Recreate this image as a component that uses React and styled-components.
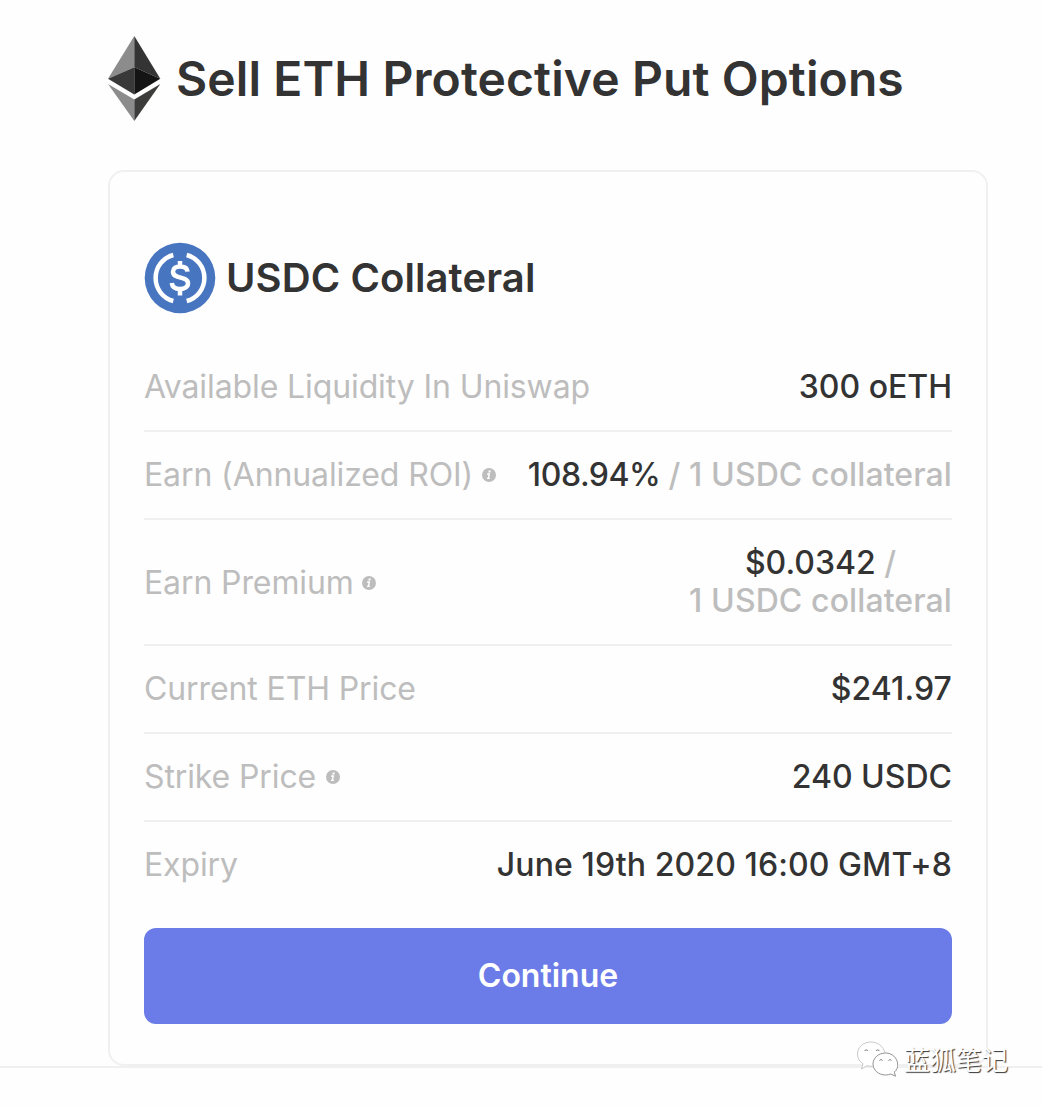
import React from 'react';
import styled, { createGlobalStyle } from 'styled-components';

const GlobalStyle = createGlobalStyle`
  * { box-sizing: border-box; }
  body {
    margin: 0;
    background: #fefefe;
    color: #333333;
    font-family: Inter, "Liberation Sans", sans-serif;
    -webkit-font-smoothing: antialiased;
  }
`;

const Page = styled.div`
  position: relative;
  width: 1042px;
  height: 1106px;
  overflow: hidden;
`;

const Content = styled.main`
  height: 1068px;
  padding: 34px 54px 0 108px;
  border-bottom: 2px solid #f0f0f0;
`;

const Header = styled.header`
  display: flex;
  align-items: center;
  gap: 15px;
  height: 90px;
  margin-bottom: 46px;
`;

const Title = styled.h1`
  margin: 0;
  font-size: 48px;
  font-weight: 600;
  line-height: 58px;
  white-space: nowrap;
  letter-spacing: 0.11px;
`;

const Card = styled.section`
  width: 880px;
  height: 896px;
  padding: 70px 34px 0;
  border: 2px solid #f0f0f0;
  border-radius: 16px;
`;

const CardHeader = styled.div`
  display: flex;
  align-items: center;
  gap: 10px;
  height: 72px;
  margin-bottom: 30px;
`;

const CardTitle = styled.h2`
  margin: 0;
  font-size: 40px;
  font-weight: 600;
  line-height: 48px;
  white-space: nowrap;
  letter-spacing: 0.1px;
`;

const Row = styled.div`
  display: flex;
  align-items: center;
  justify-content: space-between;
  padding: 24px 0;
  border-bottom: 2px solid #f0f0f0;
  font-size: 32px;
  line-height: 38px;
  white-space: nowrap;

  &:last-of-type { border-bottom: 0; }
`;

const Label = styled.div`
  display: flex;
  align-items: center;
  gap: ${(p) => p.$gap || 10}px;
  padding-top: ${(p) => (p.$tall ? 2 : 0)}px;
  color: #bdbdbd;
  font-weight: 400;
  letter-spacing: -0.11px;
`;

const Value = styled.div`
  font-weight: 500;
  text-align: center;
  letter-spacing: ${(p) => p.$spacing || 'normal'};
`;

const Muted = styled.span`
  color: #bdbdbd;
  letter-spacing: 0.1px;
`;

const Button = styled.button`
  width: 100%;
  height: 96px;
  margin-top: 20px;
  padding: 0;
  border: 0;
  border-radius: 12px;
  background: #6b7ce8;
  color: #fff;
  font: 600 32px/38px Inter, "Liberation Sans", sans-serif;
`;

const Watermark = styled.div`
  position: absolute;
  left: 856px;
  top: 1039px;
  display: flex;
  align-items: center;
  gap: 6px;
  height: 40px;
`;

const WatermarkText = styled.span`
  color: #fff;
  font-family: "Noto Sans CJK SC", sans-serif;
  font-size: 26px;
  line-height: 38px;
  text-shadow: 1px 1px 1px #333;
`;

const EthLogo = () => (
  <svg width="53" height="90" viewBox="0 0 53 90">
    <path fill="#8c8c8c" d="M26.3 2 0 44.8l26.3-11.6z" />
    <path fill="#343434" d="m26.3 2 26 42.8-26-11.6z" />
    <path fill="#393939" d="M26.3 33.2 0 44.8l26.3 15.7z" />
    <path fill="#141414" d="m26.3 33.2 26 11.6-26 15.7z" />
    <path fill="#8c8c8c" d="m0 50 26.3 15.5V87z" />
    <path fill="#3c3c3b" d="M52.3 50 26.3 65.5V87z" />
  </svg>
);

const UsdcLogo = () => (
  <svg width="72" height="72" viewBox="0 0 72 72">
    <circle cx="36" cy="36" r="35.3" fill="#4775c0" />
    <g fill="none" stroke="#fff" strokeWidth="4.5">
      <path d="M29.3 13a23.8 23.8 0 0 0 0 46M42.7 13a23.8 23.8 0 0 1 0 46" />
      <path d="M43.5 29.7c-.2-3.6-3.2-5.2-7.5-5.2s-7 2-7 5.2c0 8 15 3.8 15 11.6 0 3.6-3.2 5.6-8 5.6s-7.8-2-8.2-5.9M36 19v5M36 47.5v6" />
    </g>
  </svg>
);

const InfoIcon = () => (
  <svg width="14" height="14" viewBox="0 0 14 14">
    <circle cx="7" cy="7" r="7" fill="#bdbdbd" />
    <path fill="#fff" d="M6.7 2.6h2.1l-.4 1.9H6.3zM5.3 5.3h2.9l-1 4.4h.9l-.3 1.4H4.900l.3-1.300h.5l.7-3.100H5z" />
  </svg>
);

const ChatLogo = () => (
  <svg width="42" height="38" viewBox="0 0 42 38">
    <g fill="#fff" strokeWidth=".8">
      <path stroke="#bbb" d="M29 12.5C27 6 21.5 2 15 2 7.5 2 1.5 7 1.5 14c0 4 2 7.5 5.5 9.7L5.5 29l5.5-3.3c2 .6 4 .6 5.5.6" />
      <path stroke="#777" d="M29.5 13C22.5 13 17 18 17 24s5.5 11 12.5 11c2 0 3.8-.4 5.4-1l4.600 2.200-1.200-4.200c2.400-2 3.900-4.700 3.400-8C41 17.500 36 13 29.500 13z" />
    </g>
    <path fill="none" stroke="#777" d="M8.500 11a2 2 0 0 1 3.500 0M20 11a2 2 0 0 1 3.500 0M23.500 20.500a1.800 1.800 0 0 1 3 0M32.500 20.500a1.800 1.800 0 0 1 3 0" />
  </svg>
);

export default function App() {
  return (
    <Page>
      <GlobalStyle />
      <Content>
        <Header>
          <EthLogo />
          <Title>Sell ETH Protective Put Options</Title>
        </Header>
        <Card>
          <CardHeader>
            <UsdcLogo />
            <CardTitle>USDC Collateral</CardTitle>
          </CardHeader>
          <Row>
            <Label>Available Liquidity In Uniswap</Label>
            <Value>300 oETH</Value>
          </Row>
          <Row>
            <Label $gap={9}>Earn (Annualized ROI)<InfoIcon /></Label>
            <Value $spacing="-0.45px">108.94% <Muted>/ 1 USDC collateral</Muted></Value>
          </Row>
          <Row>
            <Label $gap={8} $tall>Earn Premium<InfoIcon /></Label>
            <Value>$0.0342 <Muted>/<br />1 USDC collateral</Muted></Value>
          </Row>
          <Row>
            <Label>Current ETH Price</Label>
            <Value $spacing="0.1px">$241.97</Value>
          </Row>
          <Row>
            <Label>Strike Price<InfoIcon /></Label>
            <Value>240 USDC</Value>
          </Row>
          <Row>
            <Label>Expiry</Label>
            <Value $spacing="0.1px">June 19th 2020 16:00 GMT+8</Value>
          </Row>
          <Button>Continue</Button>
        </Card>
      </Content>
      <Watermark>
        <ChatLogo />
        <WatermarkText>蓝狐笔记</WatermarkText>
      </Watermark>
    </Page>
  );
}
